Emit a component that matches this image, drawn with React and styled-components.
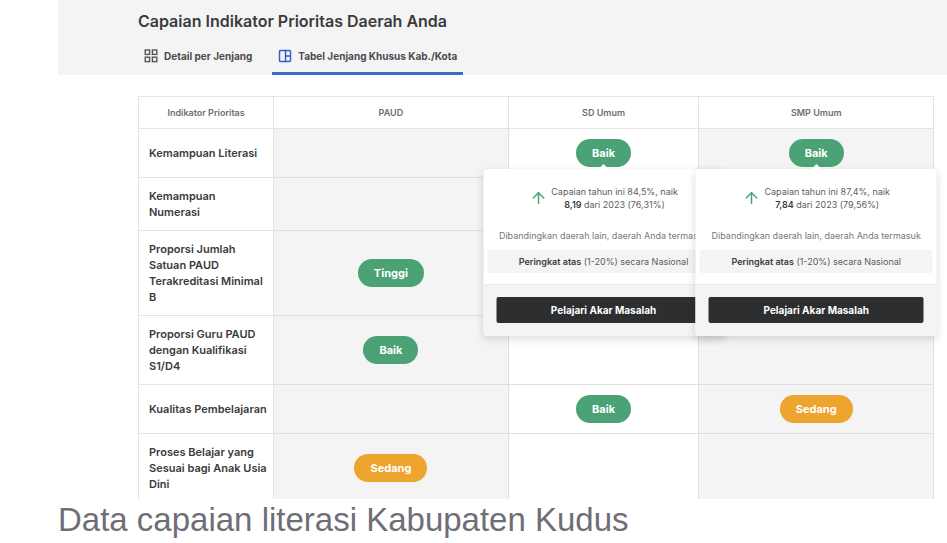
import styled, { createGlobalStyle } from 'styled-components';
import { ArrowUp } from 'lucide-react';

const GlobalStyle = createGlobalStyle`
  * {
    box-sizing: border-box;
  }
  body {
    margin: 0;
    background-color: #ffffff;
    color: #3a3b3e;
    font-family: Inter, 'Liberation Sans', sans-serif;
  }
  button {
    font-family: inherit;
    cursor: pointer;
  }
`

const columns = ['PAUD', 'SD Umum', 'SMP Umum'];

const rows = [
  {
    label: 'Kemampuan Literasi',
    cells: [
      null,
      { status: 'Baik', detail: { now: '84,5%', diff: '8,19', before: '76,31%' } },
      { status: 'Baik', detail: { now: '87,4%', diff: '7,84', before: '79,56%' } },
    ],
  },
  { label: 'Kemampuan Numerasi', cells: [null, null, null] },
  { label: 'Proporsi Jumlah Satuan PAUD Terakreditasi Minimal B', cells: [{ status: 'Tinggi' }, null, null] },
  { label: 'Proporsi Guru PAUD dengan Kualifikasi S1/D4', cells: [{ status: 'Baik' }, null, null] },
  { label: 'Kualitas Pembelajaran', cells: [null, { status: 'Baik' }, { status: 'Sedang' }] },
  { label: 'Proses Belajar yang Sesuai bagi Anak Usia Dini', cells: [{ status: 'Sedang' }, null, null] },
];

const GridIcon = () => (
  <svg width="14" height="14" viewBox="0 0 14 14" fill="none" stroke="#55565a" strokeWidth="1.4" aria-hidden="true">
    <rect x="1.2" y="1" width="4.4" height="4.4" />
    <rect x="8.4" y="1" width="4.4" height="4.4" />
    <rect x="1.2" y="8.2" width="4.4" height="4.4" />
    <rect x="8.4" y="8.2" width="4.4" height="4.4" />
  </svg>
)

const BoardIcon = () => (
  <svg width="14" height="14" viewBox="0 0 14 14" fill="none" stroke="#2f5fc4" strokeWidth="1.5" aria-hidden="true">
    <rect x="1.5" y="1.5" width="11" height="11" rx="1" />
    <path d="M7.5 1.5v11M7.5 7h5" />
  </svg>
)

const Detail = ({ now, diff, before }) => (
  <Popover>
    <Caret />
    <PopoverBody>
      <Change>
        <ArrowUp size={18} color="#4ba375" strokeWidth={2} />
        <p>
          Capaian tahun ini {now}, naik
          <br />
          <b>{diff}</b> dari 2023 ({before})
        </p>
      </Change>
      <Compare>Dibandingkan daerah lain, daerah Anda termasuk</Compare>
      <Rank>
        <b>Peringkat atas</b> (1-20%) secara Nasional
      </Rank>
    </PopoverBody>
    <PopoverFooter>
      <Action type="button">Pelajari Akar Masalah</Action>
    </PopoverFooter>
  </Popover>
)

const App = () => {
  return (
    <Page>
      <GlobalStyle />
      <Header>
        <Title>Capaian Indikator Prioritas Daerah Anda</Title>
        <Tabs>
          <Tab type="button">
            <GridIcon />
            Detail per Jenjang
          </Tab>
          <Tab type="button" $active aria-current="page">
            <BoardIcon />
            Tabel Jenjang Khusus Kab./Kota
          </Tab>
        </Tabs>
      </Header>
      <TableWrapper>
        <Table>
          <thead>
            <tr>
              <HeadCell $width="17%" scope="col">Indikator Prioritas</HeadCell>
              <HeadCell $width="29.5%" scope="col">{columns[0]}</HeadCell>
              <HeadCell $width="24%" scope="col">{columns[1]}</HeadCell>
              <HeadCell $width="29.5%" scope="col">{columns[2]}</HeadCell>
            </tr>
          </thead>
          <tbody>
            {rows.map((row) => (
              <Row key={row.label}>
                <Label scope="row">{row.label}</Label>
                {row.cells.map((cell, i) => (
                  <Cell key={columns[i]} $shaded={i !== 1}>
                    {cell && (
                      <Anchor>
                        <Pill $status={cell.status}>{cell.status}</Pill>
                        {cell.detail && <Detail {...cell.detail} />}
                      </Anchor>
                    )}
                  </Cell>
                ))}
              </Row>
            ))}
          </tbody>
        </Table>
      </TableWrapper>
      <Caption>Data capaian literasi Kabupaten Kudus</Caption>
    </Page>
  )
}

const Page = styled.main`
  margin-left: 58px;
`

const Header = styled.header`
  padding: 11px 13px 0 80px;
  background-color: #f4f4f4;
`

const Title = styled.h1`
  margin: 0;
  font-size: 16px;
  line-height: 20px;
  font-weight: 600;
`

const Tabs = styled.nav`
  display: flex;
  gap: 14px;
  margin-top: 7px;
`

const Tab = styled.button`
  display: flex;
  align-items: center;
  gap: 6px;
  height: 37px;
  padding: 2px 6px 0;
  border: 0;
  border-bottom: 3px solid ${(props) => (props.$active ? '#3a6fc9' : 'transparent')};
  background: none;
  color: #4a4b4f;
  font-size: 10px;
  font-weight: 700;
`

const TableWrapper = styled.div`
  padding: 21px 13px 0 80px;
`

const Table = styled.table`
  width: 100%;
  table-layout: fixed;
  border-collapse: collapse;
`

const HeadCell = styled.th`
  width: ${(props) => props.$width};
  height: 32px;
  padding: 0;
  border: 1px solid #e4e4e4;
  color: #6c6d70;
  font-size: 9px;
  font-weight: 600;
`

const Label = styled.th`
  padding: 10px 6px 10px 10px;
  border: 1px solid #e4e4e4;
  font-size: 11px;
  line-height: 16px;
  font-weight: 600;
  text-align: left;
`

const Cell = styled.td`
  padding: 10px;
  border: 1px solid #e0e0e0;
  background-color: ${(props) => (props.$shaded ? '#f4f4f4' : '#ffffff')};
`

const Row = styled.tr`
  height: 49px;
  &:last-child > * {
    padding-bottom: 7px;
    border-bottom: 0;
  }
`

const Anchor = styled.div`
  position: relative;
  display: flex;
  justify-content: center;
`

const Pill = styled.span`
  height: 28px;
  padding: 0 16px;
  border-radius: 14px;
  background-color: ${(props) => (props.$status === 'Sedang' ? '#eda52f' : '#4ba375')};
  color: #ffffff;
  font-size: 11px;
  line-height: 28px;
  font-weight: 700;
`

const Popover = styled.div`
  position: absolute;
  z-index: 1;
  top: calc(100% + 2px);
  left: 50%;
  width: 241px;
  transform: translateX(-50%);
  border-radius: 4px;
  background-color: #ffffff;
  box-shadow: 0 3px 8px rgba(0, 0, 0, 0.14);
  color: #5c5d60;
  font-size: 9px;
  line-height: 13px;
  text-align: center;
`

const Caret = styled.span`
  position: absolute;
  top: -5px;
  left: calc(50% - 5px);
  border: 5px solid transparent;
  border-top: 0;
  border-bottom-color: #ffffff;
`

const PopoverBody = styled.div`
  padding: 16px 4px 11px;
  b {
    color: #3a3b3e;
    font-weight: 600;
  }
`

const Change = styled.div`
  display: flex;
  align-items: center;
  justify-content: center;
  gap: 4px;
  p {
    margin: 0;
  }
`

const Compare = styled.p`
  margin: 18px 0 8px;
  color: #77787b;
  white-space: nowrap;
`

const Rank = styled.p`
  margin: 0;
  padding: 5px 0;
  border-radius: 2px;
  background-color: #f4f4f4;
`

const PopoverFooter = styled.div`
  padding: 12px 13px 13px;
  border-top: 1px solid #eaeaea;
  border-radius: 0 0 4px 4px;
  background-color: #f4f4f4;
`

const Action = styled.button`
  display: block;
  width: 100%;
  height: 26px;
  padding: 0;
  border: 0;
  border-radius: 2px;
  background-color: #2d2e30;
  color: #ffffff;
  font-size: 10px;
  font-weight: 700;
`

const Caption = styled.p`
  margin: 0;
  color: #6f6e77;
  font-family: 'Liberation Sans', Arial, sans-serif;
  font-size: 33px;
  line-height: 42px;
`

export default App
